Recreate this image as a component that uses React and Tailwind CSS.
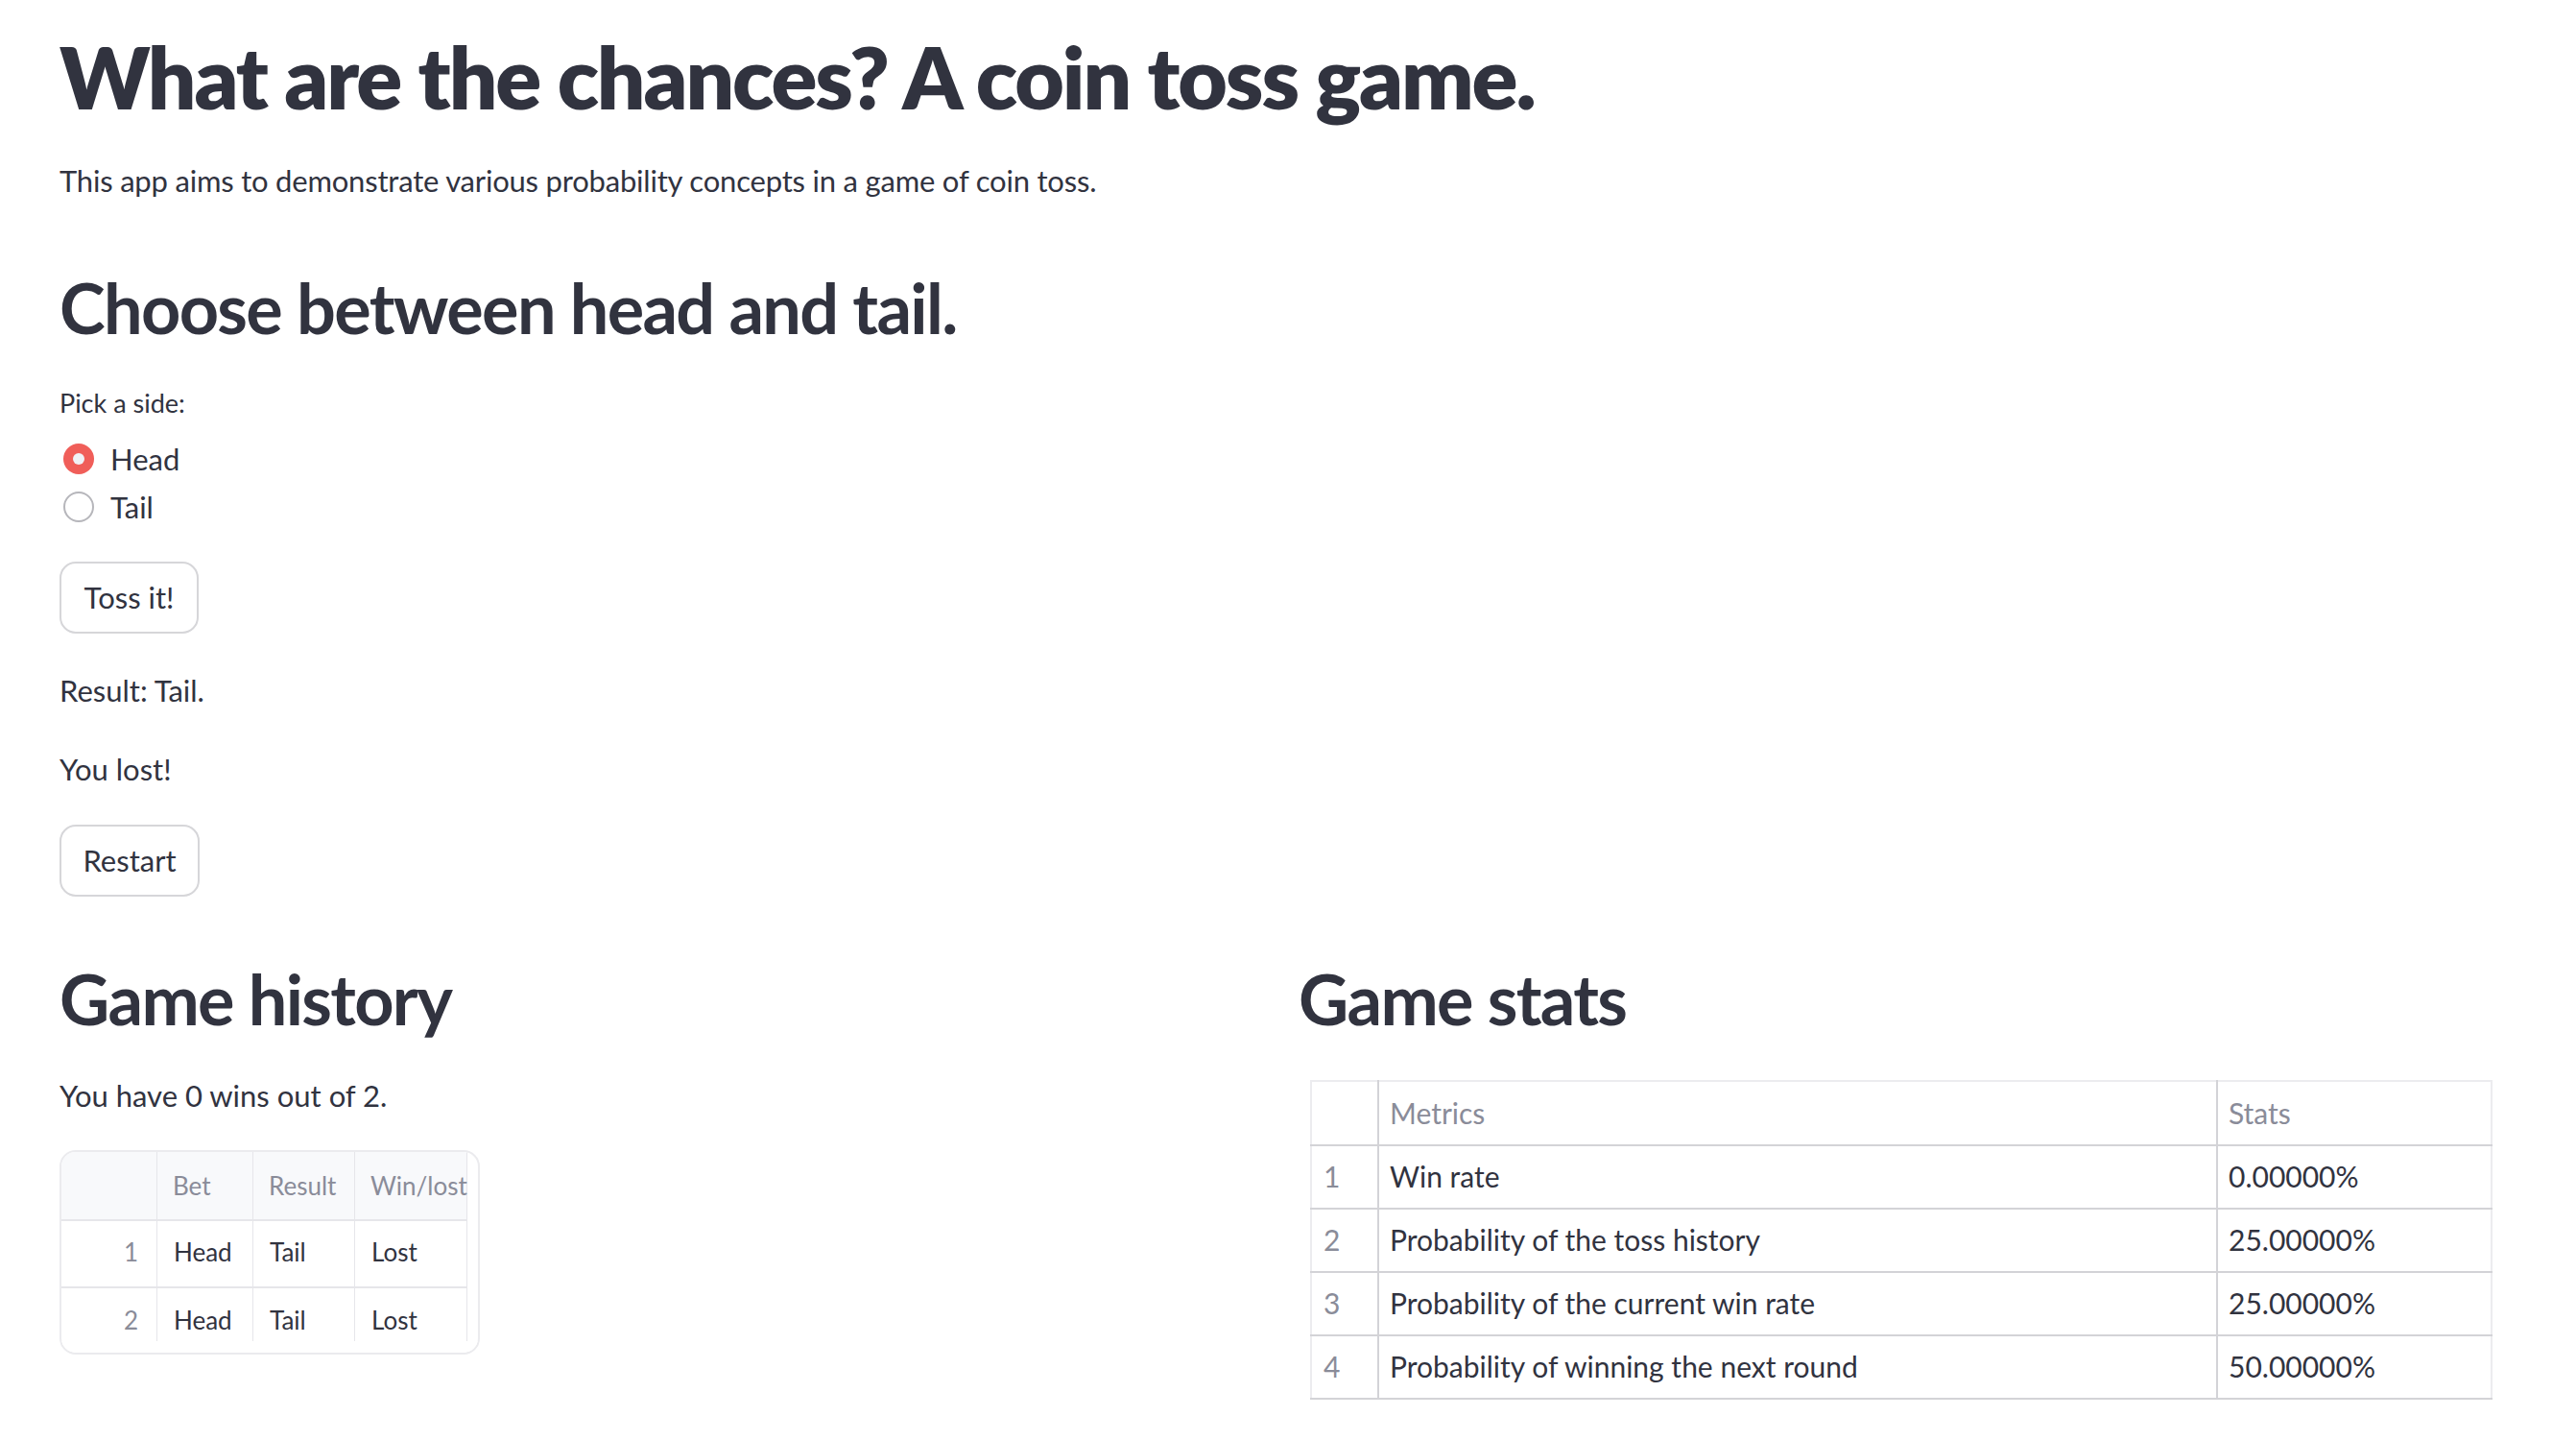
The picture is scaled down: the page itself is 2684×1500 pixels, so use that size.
import React from "react";

const historyRows = [
  { i: 1, bet: "Head", result: "Tail", wl: "Lost" },
  { i: 2, bet: "Head", result: "Tail", wl: "Lost" },
];

const statsRows = [
  { i: 1, m: "Win rate", s: "0.00000%" },
  { i: 2, m: "Probability of the toss history", s: "25.00000%" },
  { i: 3, m: "Probability of the current win rate", s: "25.00000%" },
  { i: 4, m: "Probability of winning the next round", s: "50.00000%" },
];

function Radio({ checked, label }) {
  return (
    <div className="flex h-[50px] items-center">
      <div className="ml-[4px] flex w-[49px] items-center">
        {checked ? (
          <span className="flex h-[32px] w-[32px] items-center justify-center rounded-full bg-[#f05e59]">
            <span className="h-[12px] w-[12px] rounded-full bg-[#f0f2f6]" />
          </span>
        ) : (
          <span className="h-[32px] w-[32px] rounded-full border-[2px] border-[#b6b6bb] bg-white" />
        )}
      </div>
      <span className="text-[31px] leading-[50px]">{label}</span>
    </div>
  );
}

function Button({ children, w }) {
  return (
    <button
      className={`flex h-[75px] items-center justify-center rounded-[17px] border-[2px] border-[#d6d6d9] bg-white text-[31px] text-[#31333f] ${w}`}
    >
      {children}
    </button>
  );
}

export default function App() {
  return (
    <div className="min-h-screen bg-white pl-[62px] pr-[75px] font-['Lato',sans-serif] text-[#31333f]">
      <h1 className="pt-[32px] text-[89px] font-extrabold leading-[96px] tracking-[-2.1px]">
        What are the chances? A coin toss game.
      </h1>
      <p className="mt-[38px] text-[31px] leading-[44px] tracking-[-0.2px]">
        This app aims to demonstrate various probability concepts in a game of coin toss.
      </p>
      <h2 className="mt-[70px] text-[72px] font-bold leading-[80px] tracking-[-1.65px]">
        Choose between head and tail.
      </h2>
      <div className="mt-[42px] text-[27px] leading-[36px]">Pick a side:</div>
      <div className="mt-[15px]">
        <Radio checked label="Head" />
        <Radio label="Tail" />
      </div>
      <div className="mt-[32px]">
        <Button w="w-[145px]">Toss it!</Button>
      </div>
      <p className="mt-[37px] text-[31px] leading-[44px]">Result: Tail.</p>
      <p className="mt-[38px] text-[31px] leading-[44px]">You lost!</p>
      <div className="mt-[36px]">
        <Button w="w-[146px]">Restart</Button>
      </div>

      <div className="mt-[66px] grid grid-cols-2 gap-[35px]">
        <div>
          <h2 className="text-[72px] font-bold leading-[80px] tracking-[-1.65px]">Game history</h2>
          <p className="mt-[39px] text-[31px] leading-[44px]">You have 0 wins out of 2.</p>
          <div className="relative mt-[35px] h-[213px] w-[438px] overflow-hidden rounded-[17px] border-[2px] border-[#ebebee] bg-white">
            <div className="grid w-[423px] grid-cols-[100px_100px_106px_117px] text-[26px]">
              <div className="h-[72px] border-b-[2px] border-r border-[#e6e6ea] bg-[#f8f9fb]" />
              {["Bet", "Result", "Win/lost"].map((h) => (
                <div
                  key={h}
                  className="flex h-[72px] items-center border-b-[2px] border-r border-[#e6e6ea] bg-[#f8f9fb] pl-[16px] text-[#8a8c99]"
                >
                  {h}
                </div>
              ))}
              {historyRows.map((r, idx) => (
                <React.Fragment key={r.i}>
                  <div
                    className={`flex h-[70px] items-center justify-end border-r border-[#e6e6ea] pb-[3px] pr-[19px] text-[#8a8c99] ${idx === 0 ? "border-b-[2px]" : ""}`}
                  >
                    {r.i}
                  </div>
                  {[r.bet, r.result, r.wl].map((c, j) => (
                    <div
                      key={j}
                      className={`flex h-[70px] items-center border-r border-[#e6e6ea] pb-[3px] pl-[17px] ${idx === 0 ? "border-b-[2px]" : ""}`}
                    >
                      {c}
                    </div>
                  ))}
                </React.Fragment>
              ))}
            </div>
            <div className="absolute bottom-0 left-0 right-0 h-[12px] bg-white" />
          </div>
        </div>
        <div>
          <h2 className="text-[72px] font-bold leading-[80px] tracking-[-1.65px]">Game stats</h2>
          <table className="mx-[12px] mt-[45px] w-[1232px] border-collapse text-[30px]">
            <thead>
              <tr className="h-[67px]">
                <th className="w-[70px] border-[2px] border-[#ececef] border-b-[#d3d3d7] border-r-[#d3d3d7]"></th>
                <th className="w-[874px] border-[2px] border-[#ececef] border-b-[#d3d3d7] border-r-[#d3d3d7] pl-[11px] text-left font-normal text-[#8a8c99]">
                  Metrics
                </th>
                <th className="border-[2px] border-[#ececef] border-b-[#d3d3d7] pl-[11px] text-left font-normal text-[#8a8c99]">
                  Stats
                </th>
              </tr>
            </thead>
            <tbody>
              {statsRows.map((r) => (
                <tr key={r.i} className="h-[66px]">
                  <td className="border-[2px] border-[#d3d3d7] border-l-[#ececef] pb-[2px] pl-[12px] text-[#8a8c99]">{r.i}</td>
                  <td className="border-[2px] border-[#d3d3d7] pb-[2px] pl-[11px]">{r.m}</td>
                  <td className="border-[2px] border-[#d3d3d7] border-r-[#ececef] pb-[2px] pl-[11px]">{r.s}</td>
                </tr>
              ))}
            </tbody>
          </table>
        </div>
      </div>
    </div>
  );
}
